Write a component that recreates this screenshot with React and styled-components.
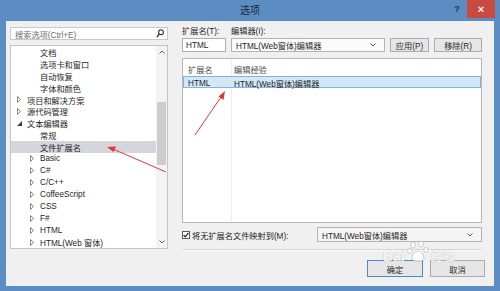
import React from 'react'
import styled, { createGlobalStyle } from 'styled-components'

const GlobalStyle = createGlobalStyle`
  html, body { margin: 0; padding: 0; background: #5b8dc3; }
  body { font-family: "Liberation Sans", "Noto Sans CJK SC", sans-serif; }
`

const treeItems = [
  { label: '文档', level: 2 },
  { label: '选项卡和窗口', level: 2 },
  { label: '自动恢复', level: 2 },
  { label: '字体和颜色', level: 2 },
  { label: '项目和解决方案', level: 1, expander: 'closed' },
  { label: '源代码管理', level: 1, expander: 'closed' },
  { label: '文本编辑器', level: 1, expander: 'open' },
  { label: '常规', level: 2 },
  { label: '文件扩展名', level: 2, selected: true },
  { label: 'Basic', level: 2, expander: 'closed' },
  { label: 'C#', level: 2, expander: 'closed' },
  { label: 'C/C++', level: 2, expander: 'closed' },
  { label: 'CoffeeScript', level: 2, expander: 'closed' },
  { label: 'CSS', level: 2, expander: 'closed' },
  { label: 'F#', level: 2, expander: 'closed' },
  { label: 'HTML', level: 2, expander: 'closed' },
  { label: 'HTML(Web 窗体)', level: 2, expander: 'closed' },
]

const Window = styled.div`
  position: relative;
  width: 500px;
  height: 291px;
  background: #5b8dc3;
  display: flex;
  flex-direction: column;
  overflow: hidden;
`

const TitleBar = styled.div`
  height: 21px;
  display: grid;
  grid-template-columns: 1fr auto 1fr;
  align-items: start;
`

const Title = styled.div`
  grid-column: 2;
  font-size: 10px;
  line-height: 21px;
  color: #1c2938;
`

const Controls = styled.div`
  justify-self: end;
  display: flex;
  align-items: flex-start;
  padding-right: 5px;
`

const HelpButton = styled.div`
  width: 20px;
  height: 17px;
  display: flex;
  align-items: center;
  justify-content: center;
  font-size: 9px;
  font-weight: bold;
  color: #1d3550;
`

const CloseButton = styled.div`
  width: 28px;
  height: 18px;
  background: #c84a40;
  display: flex;
  align-items: center;
  justify-content: center;
  color: #fff;
  font-size: 11px;
  font-weight: bold;
`

const Client = styled.div`
  flex: 1;
  margin: 0 6px 5px;
  background: #f0f0f0;
  display: flex;
  gap: 14px;
  padding: 6px 0 0 4px;
  font-size: 8.2px;
  color: #1e1e1e;
`

const LeftColumn = styled.div`
  width: 158px;
  display: flex;
  flex-direction: column;
  gap: 5px;
`

const SearchBox = styled.div`
  height: 13px;
  box-sizing: border-box;
  border: 1px solid #c9c9c9;
  background: #fff;
  display: flex;
  align-items: center;
  justify-content: space-between;
  padding: 0 3px 0 4px;
  color: #6d6d6d;
`

const Tree = styled.div`
  height: 204px;
  box-sizing: border-box;
  border: 1px solid #c4c4c4;
  background: #fff;
  display: flex;
`

const TreeRows = styled.div`
  flex: 1;
  display: flex;
  flex-direction: column;
`

const TreeRow = styled.div`
  height: 11.9px;
  display: flex;
  align-items: center;
  padding-left: ${p => (p.$level === 1 ? 6 : 19)}px;
  background: ${p => (p.$selected ? '#d5d5dc' : 'transparent')};
  white-space: nowrap;
`

const Expander = styled.span`
  width: 10px;
  display: flex;
  align-items: center;
`

const ScrollBar = styled.div`
  width: 11px;
  background: #f3f3f3;
  display: flex;
  flex-direction: column;
  align-items: center;
`

const ScrollArrow = styled.div`
  height: 12px;
  display: flex;
  align-items: center;
  justify-content: center;
`

const ScrollTrack = styled.div`
  flex: 1;
  width: 100%;
  display: flex;
  justify-content: center;
`

const ScrollThumb = styled.div`
  width: 9px;
  height: 63px;
  margin-top: 44px;
  background: #cdcdcd;
`

const RightColumn = styled.div`
  width: 303px;
  display: flex;
  flex-direction: column;
`

const EditGrid = styled.div`
  width: 300px;
  display: grid;
  grid-template-columns: 44px 154px 39px 1fr;
  column-gap: 5px;
  margin-top: ${p => p.$top || 0}px;
  height: ${p => p.$height}px;
`

const Label = styled.div`
  line-height: 10px;
  white-space: nowrap;
  color: #1e1e1e;
`

const TextInput = styled.div`
  box-sizing: border-box;
  border: 1px solid #abadb3;
  background: #fff;
  display: flex;
  align-items: center;
  padding-left: 3px;
`

const ComboBox = styled.div`
  box-sizing: border-box;
  width: ${p => (p.$width ? `${p.$width}px` : 'auto')};
  height: ${p => (p.$height ? `${p.$height}px` : 'auto')};
  border: 1px solid #b3b3b3;
  background: ${p => p.$bg || '#fbfbfb'};
  display: flex;
  align-items: center;
  justify-content: space-between;
  padding: 0 8px 0 4px;
  margin-left: ${p => (p.$push ? 'auto' : '0')};
`

const Button = styled.div`
  box-sizing: border-box;
  width: ${p => (p.$width ? `${p.$width}px` : 'auto')};
  height: ${p => (p.$height ? `${p.$height}px` : 'auto')};
  border: 1px solid ${p => (p.$default ? '#4a8bc9' : '#acacac')};
  background: #e6e6e6;
  display: flex;
  align-items: center;
  justify-content: center;
  color: #2a2a2a;
`

const ListView = styled.div`
  width: 300px;
  height: 165px;
  margin-top: 6px;
  box-sizing: border-box;
  border: 1px solid #b8b8b8;
  background: linear-gradient(to right, transparent 48px, #eceef0 48px, #eceef0 49px, transparent 49px), #fff;
  padding-top: 2px;
`

const ListRow = styled.div`
  height: ${p => (p.$header ? 15 : 12)}px;
  box-sizing: border-box;
  display: grid;
  grid-template-columns: 49px 1fr;
  align-items: center;
  border: 1px solid ${p => (p.$selected ? '#7fb3e0' : 'transparent')};
  background: ${p => (p.$selected ? '#d3e7f8' : 'transparent')};
  color: ${p => (p.$header ? '#4b4b4b' : '#1e1e1e')};
`

const Cell = styled.span`
  padding-left: ${p => (p.$first ? 4 : 1)}px;
  white-space: nowrap;
`

const MapRow = styled.div`
  width: 300px;
  height: 15px;
  margin-top: 4px;
  display: flex;
  align-items: center;
`

const CheckLabel = styled.label`
  display: flex;
  align-items: center;
  gap: 2px;
  white-space: nowrap;
`

const CheckBox = styled.span`
  width: 8px;
  height: 8px;
  box-sizing: border-box;
  border: 1px solid #5a5a5a;
  background: #fff;
  display: flex;
  align-items: center;
  justify-content: center;
`

const Separator = styled.div`
  width: 300px;
  height: 1px;
  margin-top: 7px;
  background: #d5d5d5;
  border-bottom: 1px solid #fcfcfc;
`

const ButtonRow = styled.div`
  display: flex;
  justify-content: flex-end;
  gap: 7px;
  margin-top: 9px;
`

const Annotations = styled.svg`
  position: absolute;
  left: 0;
  top: 0;
  pointer-events: none;
`

const Watermark = styled.div`
  position: absolute;
  left: 383px;
  top: 239px;
  display: flex;
  align-items: center;
  gap: 2px;
  color: rgba(255, 255, 255, 0.9);
  text-shadow: 0 0 1px rgba(90, 90, 90, 0.45);
  font-family: "Liberation Sans", "Noto Sans CJK SC", sans-serif;
  pointer-events: none;
`

const WatermarkText = styled.span`
  font-size: ${p => p.$size}px;
  font-weight: bold;
  margin-top: 8px;
`

const Chevron = ({ color = '#555' }) => (
  <svg width="6" height="4" viewBox="0 0 6 4">
    <polyline points="0.5,0.5 3,3 5.5,0.5" fill="none" stroke={color} strokeWidth="1" />
  </svg>
)

const ChevronUp = () => (
  <svg width="6" height="4" viewBox="0 0 6 4">
    <polyline points="0.5,3.5 3,1 5.5,3.5" fill="none" stroke="#606060" strokeWidth="1" />
  </svg>
)

const SearchIcon = () => (
  <svg width="8" height="9" viewBox="0 0 8 9">
    <circle cx="5" cy="3.2" r="2.4" fill="none" stroke="#333" strokeWidth="1.1" />
    <line x1="3.3" y1="5" x2="0.8" y2="8.2" stroke="#333" strokeWidth="1.3" />
  </svg>
)

const TreeExpander = ({ kind }) => {
  if (kind === 'closed') {
    return (
      <svg width="4" height="7" viewBox="0 0 4 7">
        <polygon points="0.5,0.5 3.5,3.5 0.5,6.5" fill="none" stroke="#7a7a7a" strokeWidth="0.9" />
      </svg>
    )
  }
  if (kind === 'open') {
    return (
      <svg width="5" height="5" viewBox="0 0 5 5">
        <polygon points="5,0 5,5 0,5" fill="#3c3c3c" />
      </svg>
    )
  }
  return null
}

const Paw = () => (
  <svg width="22" height="24" viewBox="0 0 22 24">
    <g fill="rgba(255,255,255,0.85)" stroke="rgba(110,110,110,0.45)" strokeWidth="0.7">
      <ellipse cx="6" cy="5" rx="2.3" ry="3" />
      <ellipse cx="14" cy="4" rx="2.3" ry="3" />
      <ellipse cx="2.8" cy="11" rx="2.2" ry="2.6" />
      <ellipse cx="19" cy="10" rx="2.2" ry="2.6" />
      <path d="M5 19 C5 13, 9 11, 11 11 C13 11, 17 13, 17 19 C17 22, 5 22, 5 19 Z" />
    </g>
  </svg>
)

const App = () => {
  return (
    <>
      <GlobalStyle />
      <Window>
        <TitleBar>
          <Title>选项</Title>
          <Controls>
            <HelpButton>?</HelpButton>
            <CloseButton>×</CloseButton>
          </Controls>
        </TitleBar>
        <Client>
          <LeftColumn>
            <SearchBox>
              <span>搜索选项(Ctrl+E)</span>
              <SearchIcon />
            </SearchBox>
            <Tree>
              <TreeRows>
                {treeItems.map(item => (
                  <TreeRow key={item.label} $level={item.level} $selected={item.selected}>
                    <Expander>
                      <TreeExpander kind={item.expander} />
                    </Expander>
                    {item.label}
                  </TreeRow>
                ))}
              </TreeRows>
              <ScrollBar>
                <ScrollArrow>
                  <ChevronUp />
                </ScrollArrow>
                <ScrollTrack>
                  <ScrollThumb />
                </ScrollTrack>
                <ScrollArrow>
                  <Chevron color="#606060" />
                </ScrollArrow>
              </ScrollBar>
            </Tree>
          </LeftColumn>
          <RightColumn>
            <EditGrid $height={10}>
              <Label>扩展名(T):</Label>
              <Label>编辑器(I):</Label>
            </EditGrid>
            <EditGrid $top={1} $height={14}>
              <TextInput>HTML</TextInput>
              <ComboBox>
                <span>HTML(Web窗体)编辑器</span>
                <Chevron />
              </ComboBox>
              <Button>应用(P)</Button>
              <Button>移除(R)</Button>
            </EditGrid>
            <ListView>
              <ListRow $header>
                <Cell $first>扩展名</Cell>
                <Cell>编辑经验</Cell>
              </ListRow>
              <ListRow $selected>
                <Cell $first>HTML</Cell>
                <Cell>HTML(Web窗体)编辑器</Cell>
              </ListRow>
            </ListView>
            <MapRow>
              <CheckLabel>
                <CheckBox>
                  <svg width="6" height="6" viewBox="0 0 6 6">
                    <polyline points="0.6,3 2.3,4.8 5.4,0.9" fill="none" stroke="#222" strokeWidth="1.2" />
                  </svg>
                </CheckBox>
                将无扩展名文件映射到(M):
              </CheckLabel>
              <ComboBox $push $width={165} $height={15} $bg="#f4f4f4">
                <span>HTML(Web窗体)编辑器</span>
                <Chevron />
              </ComboBox>
            </MapRow>
            <Separator />
            <ButtonRow>
              <Button $default $width={56} $height={17}>确定</Button>
              <Button $width={55} $height={17}>取消</Button>
            </ButtonRow>
          </RightColumn>
        </Client>
        <Watermark>
          <WatermarkText $size={14}>Bai</WatermarkText>
          <Paw />
          <WatermarkText $size={12}>经验</WatermarkText>
        </Watermark>
        <Annotations width="500" height="291" viewBox="0 0 500 291">
          <g stroke="#e4343c" fill="#e4343c">
            <line x1="166" y1="172" x2="113" y2="149" strokeWidth="1" />
            <polygon points="107,147 116,146.5 113.5,152" stroke="none" />
            <line x1="195" y1="135" x2="221" y2="97" strokeWidth="1" />
            <polygon points="225,91 223.5,100 218.5,96.5" stroke="none" />
          </g>
        </Annotations>
      </Window>
    </>
  )
}

export default App
